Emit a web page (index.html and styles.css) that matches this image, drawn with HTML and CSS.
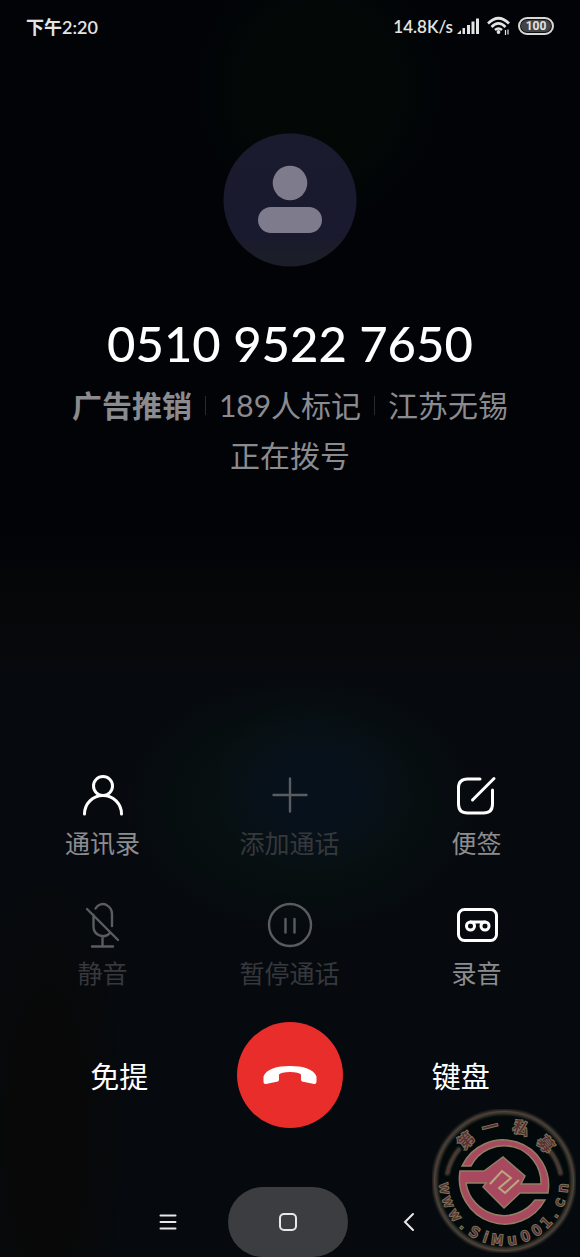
FILE: index.html
```html
<!DOCTYPE html>
<html lang="zh-CN">
<head>
    <meta charset="utf-8">
    <meta name="viewport" content="width=device-width, initial-scale=1">
    <title>正在拨号</title>
    <link rel="stylesheet" href="styles.css">
</head>
<body>
    <header class="status-bar">
        <span>下午2:20</span>
        <div class="status-right">
            <span class="speed">14.8K/s</span>
            <svg class="signal" width="22" height="18" viewBox="0 0 22 18" fill="#e4e4e4">
                <path d="M0 17l4-4v4zM5.500 11h2.500v6H5.500zM10 8h3v9h-3zM14.500 4.500h3V17h-3zM19 1.500h3V17h-3z"/>
            </svg>
            <svg class="wifi" width="24" height="20" viewBox="0 0 24 20" fill="none" stroke="#e4e4e4" stroke-width="2.600">
                <path d="M1 7.500Q11.500-3 22 7.500M4.500 11Q11.500 4 18.500 11M8 14Q11.500 11 15 14"/>
                <circle cx="11.500" cy="16" r="1.900" fill="#e4e4e4" stroke="none"/>
                <path d="M18.500 14v5M21 13.500v5" stroke-width="1.200"/>
            </svg>
            <span class="battery">100</span>
        </div>
    </header>

    <main class="call">
        <section class="caller">
            <svg class="avatar" width="134" height="134" viewBox="0 0 134 134">
                <defs>
                    <linearGradient id="avatarFill" x1="0" y1="0" x2="0" y2="1">
                        <stop offset="0" stop-color="#1b1b2e"/>
                        <stop offset="0.75" stop-color="#19192f"/>
                        <stop offset="0.9" stop-color="#1b1d28"/>
                    </linearGradient>
                </defs>
                <circle cx="67" cy="67" r="66.500" fill="url(#avatarFill)"/>
                <circle cx="67" cy="50" r="17.300" fill="#7e7b8d"/>
                <rect x="35" y="74" width="64" height="26" rx="13" fill="#7e7b8d"/>
            </svg>
            <h1 class="number">0510 9522 7650</h1>
            <p class="info">
                <strong>广告推销</strong>
                <span>189人标记</span>
                <span>江苏无锡</span>
            </p>
            <p class="state">正在拨号</p>
        </section>

        <section class="actions">
            <button class="action">
                <svg width="48" height="48" viewBox="0 0 48 48">
                    <circle cx="24" cy="14" r="9.500"/>
                    <path d="M5.500 42a18.500 18.500 0 0 1 37 0"/>
                </svg>
                通讯录
            </button>
            <button class="action" disabled>
                <svg width="48" height="48" viewBox="0 0 48 48">
                    <path d="M24 6.500v33M7.500 23h33"/>
                </svg>
                添加通话
            </button>
            <button class="action">
                <svg width="48" height="48" viewBox="0 0 48 48">
                    <path d="M27 7H14.500Q5.500 7 5.500 16v16q0 9 9 9h16q9 0 9-9V18M19.500 28L41 6.500"/>
                </svg>
                便签
            </button>
            <button class="action" disabled>
                <svg width="48" height="48" viewBox="0 0 48 48">
                    <path d="M16.500 6.500C19 2 24 1 27.500 3Q33 6 33 12v12M14.500 13v11.500a9.500 9.500 0 0 0 16.500 6.500M8 7l31 31M23.500 34v10.500M13 44.500h21"/>
                </svg>
                静音
            </button>
            <button class="action" disabled>
                <svg width="48" height="48" viewBox="0 0 48 48">
                    <circle cx="24" cy="23" r="21"/>
                    <path d="M19.500 17v13.500M28.500 17v13.500"/>
                </svg>
                暂停通话
            </button>
            <button class="action">
                <svg width="48" height="48" viewBox="0 0 48 48">
                    <rect x="5.500" y="7.500" width="38" height="31" rx="6"/>
                    <circle cx="17.500" cy="24" r="4"/>
                    <circle cx="32" cy="24" r="4"/>
                    <path d="M17.500 20H32"/>
                </svg>
                录音
            </button>
        </section>

        <section class="call-bar">
            <button class="text-button">免提</button>
            <button class="hang-up" aria-label="挂断">
                <svg width="54" height="20" viewBox="0 0 54 20" fill="#fff">
                    <path d="M.5 17V11.500C3 4 14 1 27 1s24 3 26.500 10.500V17q-.5 2.500-2.500 2L39 16.500q-1-.5-1-2V9.500Q36 7 27 7T16 9.500v5q0 1.500-1 2L3 19Q.5 19.500.5 17z"/>
                </svg>
            </button>
            <button class="text-button">键盘</button>
        </section>
    </main>

    <nav class="nav-bar">
        <button class="nav-button" aria-label="菜单">
            <svg width="20" height="20" viewBox="0 0 20 20"><path d="M2.500 3.500h15M2.500 10h15M2.500 16.500h15"/></svg>
        </button>
        <button class="nav-button home" aria-label="主页">
            <svg width="20" height="20" viewBox="0 0 20 20"><rect x="2" y="2" width="16" height="16" rx="4"/></svg>
        </button>
        <button class="nav-button" aria-label="返回">
            <svg width="20" height="20" viewBox="0 0 20 20"><path d="M15 2l-8 8 8 8"/></svg>
        </button>
    </nav>

    <svg class="stamp" width="144" height="144" viewBox="2 4 144 144">
        <defs>
            <path id="arcTop" d="M24 76a50 50 0 0 1 100 0"/>
            <path id="arcBottom" d="M10 76a64 64 0 0 0 128 0"/>
            <filter id="glow" x="-20%" y="-20%" width="140%" height="140%">
                <feGaussianBlur stdDeviation="0.8"/>
            </filter>
        </defs>
        <circle cx="74" cy="76" r="69" fill="#000705" fill-opacity="0.5"/>
        <g fill="none">
            <circle cx="74" cy="76" r="69" stroke="#3d3b32" stroke-width="5" filter="url(#glow)"/>
            <circle cx="74" cy="76" r="69.500" stroke="#5b4039" stroke-width="1"/>
            <path d="M17 70A57 57 0 0 1 30 43M120 46a57 57 0 0 1 11 24" stroke="#504c3d" stroke-width="4" filter="url(#glow)"/>
            <path d="M17 70A57 57 0 0 1 30 43M120 46a57 57 0 0 1 11 24" stroke="#552b30" stroke-width="1"/>
        </g>
        <g class="stamp-mark">
            <path d="M32 61A45.500 45.500 0 0 1 118 88H90L74 103 53 82 56 78H36A38.500 38.500 0 0 0 105 95H115A45.500 45.500 0 0 1 30 66H54L73 52 95 71 91 79H111A37 37 0 0 0 41 61z"/>
            <path class="stamp-line" d="M60 79L72 66 81 73 69 83 75 88 89 75"/>
        </g>
        <g class="stamp-top">
            <text><textPath href="#arcTop" startOffset="26%">第</textPath></text>
            <text><textPath href="#arcTop" startOffset="42%">一</textPath></text>
            <text><textPath href="#arcTop" startOffset="60%">私</textPath></text>
            <text><textPath href="#arcTop" startOffset="77%">募</textPath></text>
        </g>
        <text class="stamp-site"><textPath href="#arcBottom"><tspan x="8 23 39 53 67 80 93 109 124 138 151 163 177 193">www.SiMu001.cn</tspan></textPath></text>
    </svg>
</body>
</html>
```
FILE: styles.css
```css
* {
    box-sizing: border-box;
}
body {
    position: relative;
    display: flex;
    flex-direction: column;
    min-height: 100vh;
    margin: 0;
    overflow-x: hidden;
    color: #fff;
    font-family: Lato, "Noto Sans CJK SC", sans-serif;
    background:
        radial-gradient(ellipse 110px 90px at 54% 63%, #07111b 40%, transparent 100%),
        radial-gradient(ellipse 180px 130px at 52% 64%, #07100f 50%, transparent 100%),
        radial-gradient(ellipse 90px 300px at 8% 90%, #080808 40%, transparent 100%),
        radial-gradient(ellipse 130px 140px at 55% 7%, #030806 50%, transparent 100%),
        linear-gradient(#010307 0%, #010307 42%, #060708 48%, #060a0f 55%, #060a0f 100%);
}
button {
    padding: 0;
    border: 0;
    background: none;
    color: inherit;
    font-family: inherit;
}
svg {
    flex: none;
}

/* status bar */
.status-bar {
    display: flex;
    justify-content: space-between;
    align-items: center;
    height: 52px;
    padding: 0 26px;
    color: #e4e4e4;
    font-size: 18px;
    font-weight: 600;
}
.status-right {
    display: flex;
    align-items: center;
}
.speed {
    font-size: 17px;
}
.signal {
    margin: 0 8px 0 4px;
}
.wifi {
    margin-right: 7px;
}
.battery {
    width: 36px;
    height: 18px;
    border: 2px solid #d8d8d8;
    border-radius: 9px;
    background: #444;
    box-shadow: inset 0 0 0 1px #111;
    font-family: Roboto, sans-serif;
    font-size: 12px;
    font-weight: 700;
    line-height: 14px;
    text-align: center;
}

/* caller */
.call {
    display: flex;
    flex: 1;
    flex-direction: column;
}
.caller {
    display: flex;
    flex-direction: column;
    align-items: center;
    padding-top: 81px;
    color: #8b8b8f;
    text-align: center;
}
.number {
    margin: 44px 0 5px;
    color: #fff;
    font-size: 49px;
    font-weight: 500;
    line-height: 64px;
}
.info,
.state {
    margin: 0;
    font-size: 30px;
    line-height: 50px;
}
.info {
    display: flex;
    justify-content: center;
    align-items: center;
}
.info span {
    display: flex;
    align-items: center;
}
.info span::before {
    content: "";
    width: 1px;
    height: 19px;
    margin: 0 13px;
    background: #292a2d;
}

/* action grid */
.actions {
    display: grid;
    grid-template-columns: repeat(3, 1fr);
    row-gap: 42px;
    margin-top: auto;
    padding: 32px 10px 32px 9px;
}
.action {
    display: flex;
    flex-direction: column;
    align-items: center;
    gap: 7px;
    color: #8b8d90;
    font-size: 25px;
    line-height: 33px;
}
.action svg {
    fill: none;
    stroke: #fff;
    stroke-width: 3;
    stroke-linecap: round;
}
.action:disabled {
    color: #35383c;
}
.action:disabled svg {
    stroke: #5a5c5f;
    stroke-width: 2.4;
}

.call-bar {
    display: grid;
    grid-template-columns: repeat(3, 1fr);
    align-items: center;
    justify-items: center;
    padding: 0 34px;
}
.text-button {
    font-size: 29px;
}
.hang-up {
    display: flex;
    align-items: center;
    justify-content: center;
    width: 106px;
    height: 106px;
    border-radius: 50%;
    background: #e82d2b;
}

/* system navigation */
.nav-bar {
    display: flex;
    justify-content: center;
    margin-top: 59px;
    padding-right: 4px;
}
.nav-button {
    display: flex;
    align-items: center;
    justify-content: center;
    width: 120px;
    height: 70px;
    border-radius: 35px;
}
.nav-button svg {
    fill: none;
    stroke: #e8e8e8;
    stroke-width: 2;
    stroke-linecap: round;
}
.home {
    background: #3b3d41;
}

/* round stamp over the corner */
.stamp {
    position: absolute;
    right: 4px;
    bottom: 4px;
    pointer-events: none;
}
.stamp-mark {
    fill: #a9495f;
    stroke: #8f8064;
    stroke-width: 1.5;
}
.stamp-mark .stamp-line {
    fill: none;
    stroke: #b9a983;
    stroke-width: 2;
}
.stamp text {
    fill: #5b2c33;
    stroke: #777158;
    stroke-width: 2;
    paint-order: stroke;
    text-anchor: middle;
}
.stamp-top {
    font-size: 16px;
    font-weight: 500;
}
.stamp-site {
    font-family: "DejaVu Sans", sans-serif;
    font-size: 14px;
}
```
